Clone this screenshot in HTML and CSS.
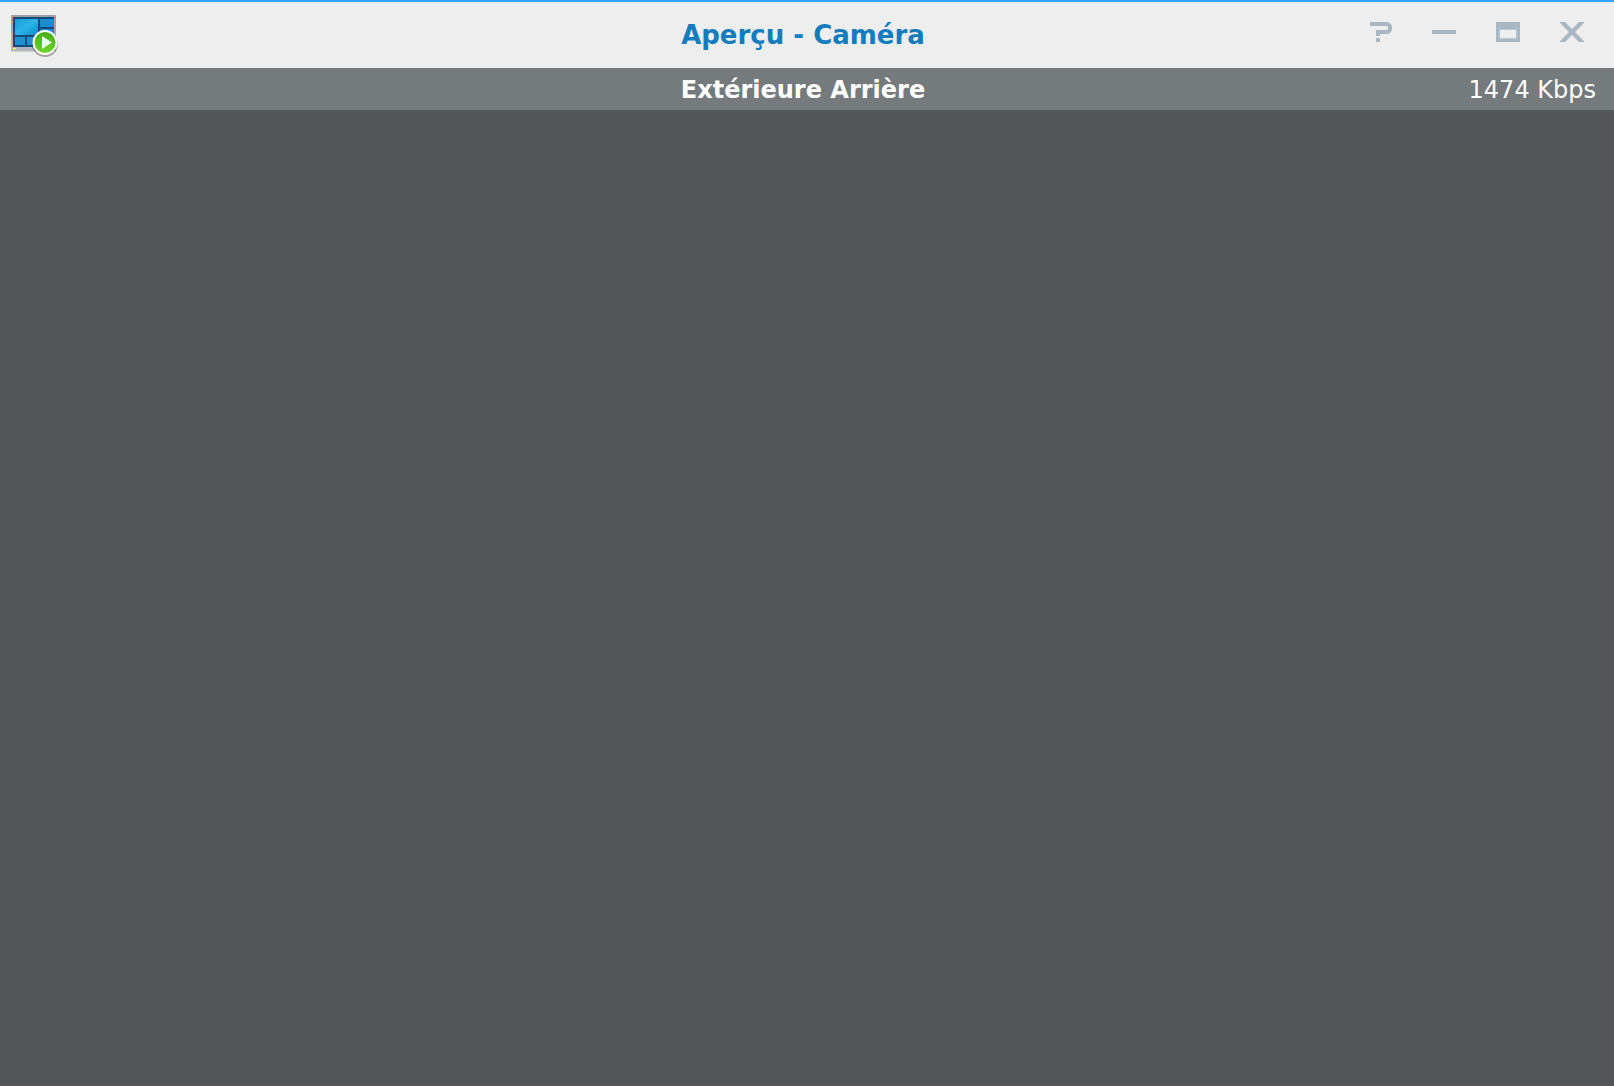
FILE: index.html
```html
<!DOCTYPE html>
<html lang="fr">
<head>
<meta charset="utf-8">
<title>Aperçu - Caméra</title>
<link rel="stylesheet" href="styles.css">
</head>
<body>
<main class="window">
  <header class="titlebar">
    <svg class="app-icon" viewBox="0 1 48 48" aria-hidden="true">
      <defs>
        <linearGradient id="frame" x1="0" y1="0" x2="0" y2="1"><stop offset="0" stop-color="#9a9fa8"/><stop offset="1" stop-color="#b3b6c0"/></linearGradient>
        <linearGradient id="pane" x1="0" y1="0" x2="1" y2="1"><stop offset="0" stop-color="#189bd4"/><stop offset=".5" stop-color="#2cb4e8"/><stop offset="1" stop-color="#1586c4"/></linearGradient>
        <linearGradient id="play" x1="0" y1="0" x2="0" y2="1"><stop offset="0" stop-color="#46ae12"/><stop offset="1" stop-color="#70d42c"/></linearGradient>
      </defs>
      <rect x="1" y="6" width="45" height="36" rx="1" fill="#000" opacity=".12"/>
      <rect x="1" y="5" width="45" height="36" rx="1" fill="url(#frame)"/>
      <rect x="3" y="7" width="41" height="30" fill="#134b7d"/>
      <rect x="5" y="9" width="23" height="16" fill="url(#pane)"/>
      <rect x="30" y="9" width="14" height="8" fill="#1c8dca"/>
      <rect x="30" y="19" width="14" height="16" fill="#1c8dca"/>
      <rect x="5" y="27" width="10" height="8" fill="#1c91ce"/>
      <rect x="17" y="27" width="11" height="8" fill="#1c91ce"/>
      <rect x="3" y="38" width="3" height="1" fill="#eff58d"/>
      <rect x="3" y="39" width="3" height="1" fill="#b9df20"/>
      <circle cx="35" cy="34" r="13" fill="#000" opacity=".3"/>
      <circle cx="35" cy="32.500" r="12.500" fill="#fff"/>
      <circle cx="35" cy="32.500" r="10.500" fill="url(#play)"/>
      <path d="M32 26L42 32.500L32 39Z" fill="#e6faff"/>
    </svg>
    <h1 class="title">Aperçu - Caméra</h1>
    <div class="controls">
      <button class="control" type="button" aria-label="Aide">
        <svg viewBox="0 0 24 20" aria-hidden="true"><path d="M2 2H18.500A3.500 3.500 0 0 1 22 5.500V6.500A3.500 3.500 0 0 1 18.500 10H10V14" fill="none" stroke="currentColor" stroke-width="4"/><path d="M8 16h4v4H8z" fill="currentColor"/></svg>
      </button>
      <button class="control" type="button" aria-label="Réduire">
        <svg viewBox="0 0 24 20" aria-hidden="true"><path d="M0 8h24v4H0z" fill="currentColor"/></svg>
      </button>
      <button class="control" type="button" aria-label="Agrandir">
        <svg viewBox="0 0 24 20" aria-hidden="true"><path d="M0 0h24v20H0z" fill="currentColor"/><path d="M3 7h18v10H3z" fill="#bac5ce"/><path d="M4 8h16v8H4z" fill="#eee"/></svg>
      </button>
      <button class="control" type="button" aria-label="Fermer">
        <svg viewBox="0 0 24 20" aria-hidden="true"><path d="M0 0H5L12 7L19 0H24V1L15 10L24 19V20H19L12 13L5 20H0V19L9 10L0 1Z" fill="currentColor"/></svg>
      </button>
    </div>
  </header>
  <div class="camera-bar">
    <h2 class="camera-name">Extérieure Arrière</h2>
    <span class="bitrate">1474 Kbps</span>
  </div>
  <section class="video" aria-label="Extérieure Arrière"></section>
</main>
</body>
</html>
```
FILE: styles.css
```css
* { box-sizing: border-box; }

body {
  margin: 0;
  font-family: Verdana, "DejaVu Sans", sans-serif;
}

.window {
  display: flex;
  flex-direction: column;
  min-height: 100vh;
  background: #525659;
  border-bottom: 1px solid #5d5255;
}

.titlebar,
.camera-bar {
  display: grid;
  grid-template-columns: 1fr auto 1fr;
  align-items: center;
}

.titlebar {
  height: 68px;
  padding: 0 10px;
  background: #eee;
  border-top: 2px solid #35a3fb;
}

.app-icon {
  width: 48px;
  height: 48px;
}

.title,
.camera-name {
  margin: 0;
  padding-right: 8px;
  font-weight: 700;
  white-space: nowrap;
}

.title {
  font-size: 26px;
  line-height: 32px;
  color: #137cbd;
}

.controls {
  display: flex;
  justify-self: end;
  padding-bottom: 6px;
}

.control {
  display: flex;
  align-items: center;
  justify-content: center;
  width: 64px;
  height: 40px;
  padding: 0;
  border: 0;
  background: none;
  color: #a9b7c2;
}

.control svg {
  width: 24px;
  height: 20px;
}

.camera-bar {
  height: 42px;
  padding: 2px 18px 0;
  font-size: 24px;
  line-height: 32px;
  color: #fff;
  background: #757a7d;
}

.camera-name {
  grid-column: 2;
  font-size: 24px;
}

.bitrate {
  justify-self: end;
}

.video {
  flex: 1;
}
```
